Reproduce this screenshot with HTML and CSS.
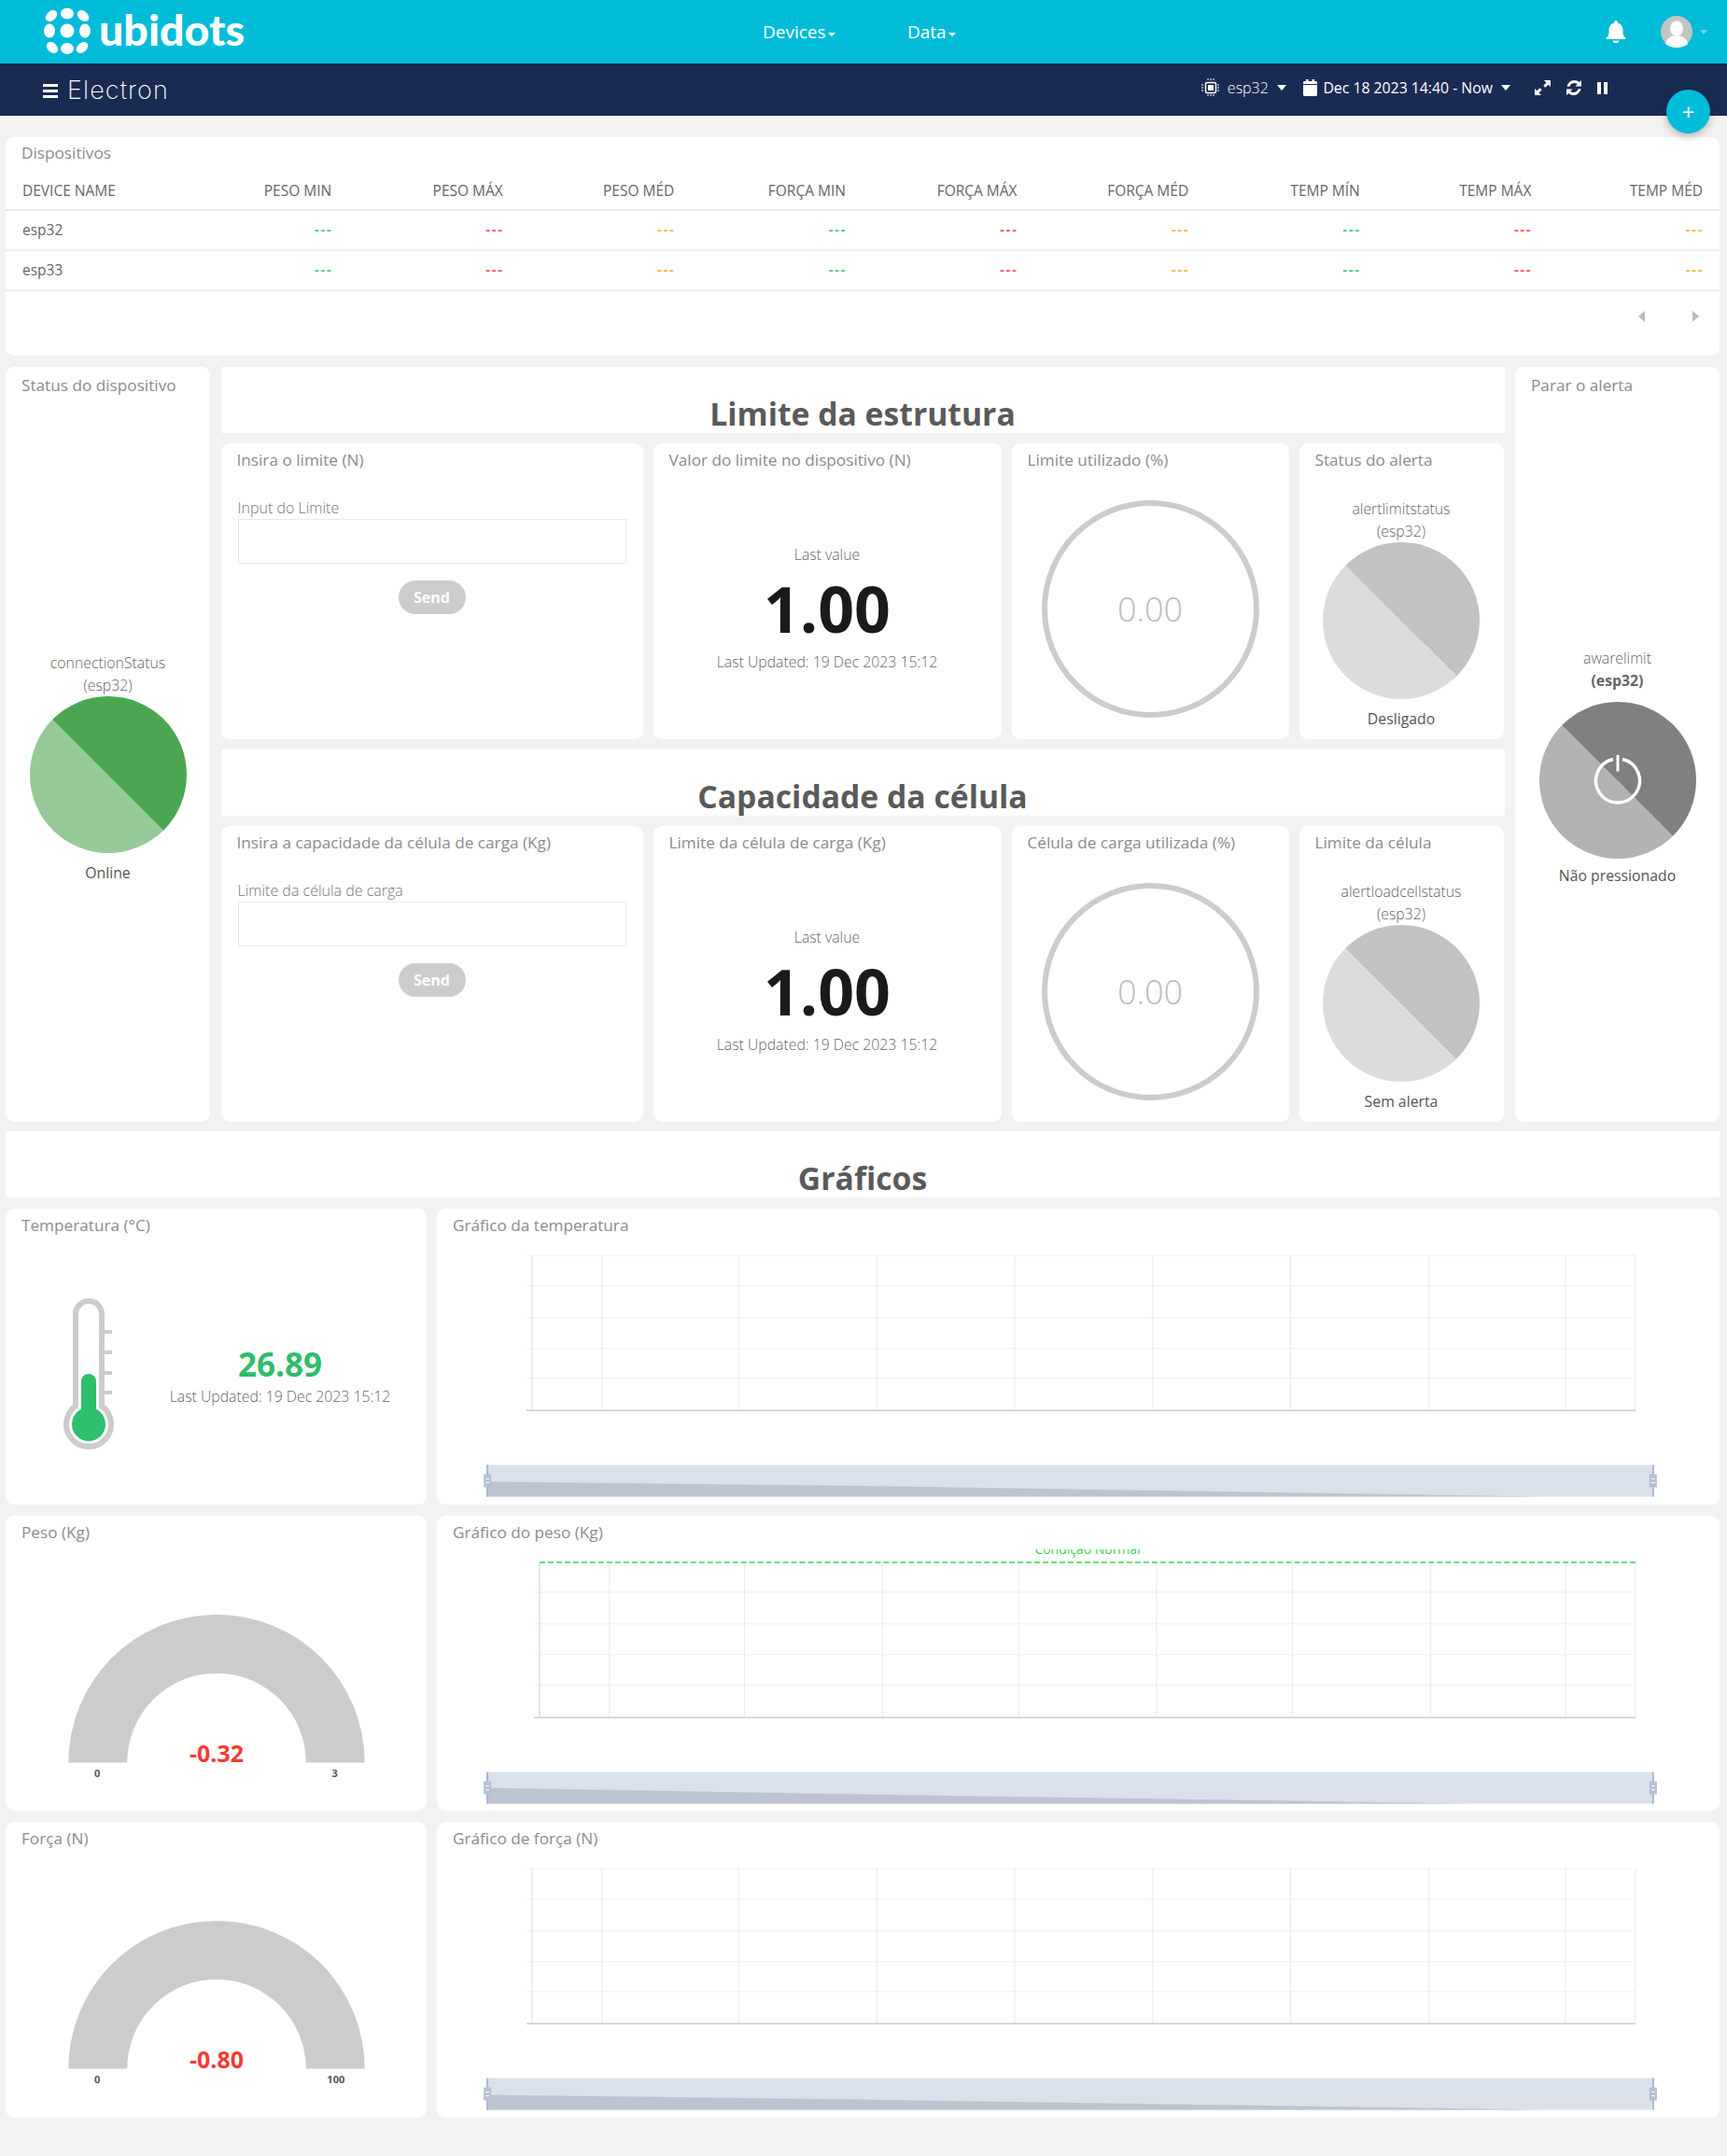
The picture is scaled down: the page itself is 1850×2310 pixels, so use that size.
FILE: index.html
```html
<!DOCTYPE html>
<html lang="en">
<head>
  <meta charset="UTF-8">
  <title>Electron - Ubidots</title>
  <link rel="stylesheet" href="styles.css">
</head>
<body>
  <header class="topbar">
    <div class="logo">
      <svg width="52" height="52" viewBox="-26 -26 52 52" fill="#fff">
        <circle r="7.5"/>
        <ellipse cy="-18.5" rx="7" ry="6"/>
        <ellipse cy="19" rx="7" ry="6"/>
        <ellipse cx="-19" rx="6" ry="7.5"/>
        <ellipse cx="19" rx="6" ry="7.5"/>
        <ellipse cx="-17" cy="-16" rx="7" ry="5" transform="rotate(-40 -17 -16)"/>
        <ellipse cx="17" cy="-16" rx="7" ry="5" transform="rotate(40 17 -16)"/>
        <ellipse cx="-16" cy="18" rx="7" ry="5" transform="rotate(40 -16 18)"/>
        <ellipse cx="16" cy="18" rx="7" ry="5" transform="rotate(-40 16 18)"/>
      </svg>
      <span class="logo-text">ubidots</span>
    </div>
    <nav class="nav-links">
      <a class="nav-link">Devices<i class="caret-small"></i></a>
      <a class="nav-link">Data<i class="caret-small"></i></a>
    </nav>
    <div class="user-menu">
      <svg class="bell" width="22" height="24" viewBox="0 0 22 24" fill="#fff">
        <path d="M11 0c1 0 1.700.7 1.700 1.700v.7c3.800.9 5.800 4 5.800 8v3.400c0 2 1.300 3.200 3 5v1.200H.5v-1.200c1.700-1.800 3-3 3-5v-3.400c0-4 2-7.100 5.800-8v-.7C9.300.7 10 0 11 0z"/>
        <path d="M7.500 21.500h7c0 1.500-1.500 2.500-3.500 2.500s-3.500-1-3.500-2.500z"/>
      </svg>
      <svg class="avatar" width="34" height="34" viewBox="0 0 34 34">
        <circle cx="17" cy="17" r="17" fill="#c4c4c4"/>
        <ellipse cx="17" cy="13.500" rx="7" ry="8" fill="#fff"/>
        <path d="M5 30c1-6 6-9 12-9s11 3 12 9c-3 2.600-7.500 4-12 4s-9-1.400-12-4z" fill="#fff"/>
      </svg>
      <i class="caret-pale"></i>
    </div>
  </header>

  <div class="subbar">
    <div class="burger"><i></i><i></i><i></i></div>
    <span class="dash-title">Electron</span>
    <div class="controls">
      <svg width="20" height="20" viewBox="0 0 20 20" fill="none" stroke="#fff">
        <rect x="4.500" y="4.500" width="11" height="11" rx="1.500" stroke-width="1.500"/>
        <rect x="7" y="7" width="6" height="6" fill="#fff" stroke="none"/>
        <path d="M7 0v3M10 0v3M13 0v3M7 17v3M10 17v3M13 17v3M0 7h3M0 10h3M0 13h3M17 7h3M17 10h3M17 13h3" stroke-width="1" stroke-dasharray="2 1"/>
      </svg>
      <span class="device-name">esp32</span>
      <i class="caret"></i>
      <svg class="calendar" width="15" height="18" viewBox="0 0 15 18" fill="#fff">
        <path d="M0 6h15v10.500c0 .8-.7 1.500-1.500 1.500h-12C.7 18 0 17.300 0 16.500z"/>
        <path d="M0 5V3.500C0 2.700.7 2 1.500 2H3V0h2.500v2h4V0H12v2h1.500c.8 0 1.500.7 1.500 1.500V5z"/>
      </svg>
      <span class="date-range">Dec 18 2023 14:40 - Now</span>
      <i class="caret"></i>
      <svg class="expand" width="17" height="16" viewBox="0 0 17 16" fill="#fff">
        <path d="M10 0h7v7l-2.400-2.300-3.300 3.100-2-2 3.200-3.200z"/>
        <path d="M0 16V9l2.400 2.300 3.300-3.100 2 2-3.200 3.200L7 16z"/>
      </svg>
      <svg class="refresh" width="16" height="16" viewBox="0 0 16 16" fill="#fff">
        <path d="M16 0v6.500H9.500l2.300-2.300C10.900 3.400 9.700 3 8.400 3 6 3 4 4.500 3.400 6.800H.6C1.300 2.900 4.500 0 8.400 0c2.200 0 4.200.8 5.500 2z"/>
        <path d="M0 16V9.500h6.500l-2.300 2.300c.9.800 2.100 1.200 3.400 1.200 2.400 0 4.400-1.500 5-3.800h2.800c-.7 3.900-3.900 6.800-7.800 6.800-2.200 0-4.200-.8-5.500-2z"/>
      </svg>
      <div class="pause"><i></i><i></i></div>
    </div>
  </div>
  <button class="fab">+</button>

  <main class="page">
    <section class="card devices">
      <h3 class="card-title title-top">Dispositivos</h3>
      <table class="device-table">
        <thead>
          <tr>
            <th>DEVICE NAME</th><th>PESO MIN</th><th>PESO MÁX</th><th>PESO MÉD</th><th>FORÇA MIN</th><th>FORÇA MÁX</th><th>FORÇA MÉD</th><th>TEMP MÍN</th><th>TEMP MÁX</th><th>TEMP MÉD</th>
          </tr>
        </thead>
        <tbody>
          <tr>
            <td>esp32</td><td class="ok">---</td><td class="bad">---</td><td class="warn">---</td><td class="ok">---</td><td class="bad">---</td><td class="warn">---</td><td class="ok">---</td><td class="bad">---</td><td class="warn">---</td>
          </tr>
          <tr>
            <td>esp33</td><td class="ok">---</td><td class="bad">---</td><td class="warn">---</td><td class="ok">---</td><td class="bad">---</td><td class="warn">---</td><td class="ok">---</td><td class="bad">---</td><td class="warn">---</td>
          </tr>
        </tbody>
      </table>
      <div class="pager"><i class="arrow-left"></i><i class="arrow-right"></i></div>
    </section>

    <section class="status-row">
      <div class="card side-card">
        <h3 class="card-title title-top2">Status do dispositivo</h3>
        <div class="indicator side-indicator">
          <p class="var-name">connectionStatus<br>(esp32)</p>
          <div class="pie pie-green"></div>
          <p class="pie-label">Online</p>
        </div>
      </div>

      <div class="middle">
        <h2 class="banner">Limite da estrutura</h2>
        <div class="middle-row">
          <div class="card">
            <h3 class="card-title">Insira o limite (N)</h3>
            <div class="input-form">
              <label class="input-label">Input do Limite</label>
              <div class="input-box"></div>
              <button class="send-btn">Send</button>
            </div>
          </div>
          <div class="card">
            <h3 class="card-title">Valor do limite no dispositivo (N)</h3>
            <div class="metric">
              <p class="metric-label">Last value</p>
              <p class="metric-value">1.00</p>
              <p class="metric-label">Last Updated: 19 Dec 2023 15:12</p>
            </div>
          </div>
          <div class="card">
            <h3 class="card-title">Limite utilizado (%)</h3>
            <div class="ring-wrap"><div class="ring">0.00</div></div>
          </div>
          <div class="card">
            <h3 class="card-title">Status do alerta</h3>
            <div class="indicator">
              <p class="var-name">alertlimitstatus<br>(esp32)</p>
              <div class="pie pie-grey"></div>
              <p class="pie-label">Desligado</p>
            </div>
          </div>
        </div>

        <h2 class="banner">Capacidade da célula</h2>
        <div class="middle-row">
          <div class="card">
            <h3 class="card-title">Insira a capacidade da célula de carga (Kg)</h3>
            <div class="input-form">
              <label class="input-label">Limite da célula de carga</label>
              <div class="input-box"></div>
              <button class="send-btn">Send</button>
            </div>
          </div>
          <div class="card">
            <h3 class="card-title">Limite da célula de carga (Kg)</h3>
            <div class="metric">
              <p class="metric-label">Last value</p>
              <p class="metric-value">1.00</p>
              <p class="metric-label">Last Updated: 19 Dec 2023 15:12</p>
            </div>
          </div>
          <div class="card">
            <h3 class="card-title">Célula de carga utilizada (%)</h3>
            <div class="ring-wrap"><div class="ring">0.00</div></div>
          </div>
          <div class="card">
            <h3 class="card-title">Limite da célula</h3>
            <div class="indicator">
              <p class="var-name">alertloadcellstatus<br>(esp32)</p>
              <div class="pie pie-grey"></div>
              <p class="pie-label">Sem alerta</p>
            </div>
          </div>
        </div>
      </div>

      <div class="card side-card">
        <h3 class="card-title title-top2">Parar o alerta</h3>
        <div class="indicator side-indicator alert-indicator">
          <p class="var-name">awarelimit<br><b>(esp32)</b></p>
          <div class="pie pie-dark">
            <svg width="60" height="60" viewBox="0 0 60 60" fill="none" stroke="#fff" stroke-width="3.500">
              <path d="M25 7.500a23.500 23.500 0 1 0 10 0"/>
              <path d="M30 3v17.500" stroke-width="3"/>
            </svg>
          </div>
          <p class="pie-label">Não pressionado</p>
        </div>
      </div>
    </section>

    <h2 class="banner banner-charts">Gráficos</h2>

    <section class="charts">
      <div class="card">
        <h3 class="card-title">Temperatura (°C)</h3>
        <div class="thermo-body">
          <svg class="thermo" width="62" height="170" viewBox="0 0 62 170">
            <path d="M17 119.500V21a14 14 0 0 1 28 0v98.500a24 24 0 1 1-28 0z" fill="none" stroke="#ccc" stroke-width="6"/>
            <path d="M48 40h8M48 62h8M48 84h8M48 105h8" stroke="#ccc" stroke-width="4"/>
            <rect x="23" y="85" width="16" height="50" rx="8" fill="#2ebf6c"/>
            <circle cx="31" cy="139" r="18" fill="#2ebf6c"/>
          </svg>
          <div class="thermo-info">
            <p class="thermo-value">26.89</p>
            <p class="metric-label">Last Updated: 19 Dec 2023 15:12</p>
          </div>
        </div>
      </div>
      <div class="card">
        <h3 class="card-title">Gráfico da temperatura</h3>
        <svg class="chart" width="1374" height="281" viewBox="0 0 1374 281" fill="none">
          <path d="M95 14h1190M95 47h1190M95 81h1190M95 114h1190M95 146h1190" stroke="#eee"/>
          <path d="M176 14v166M322.500 14v166M471 14v166M619 14v166M767 14v166M915 14v166M1063.500 14v166M1210 14v166M1285 14v166" stroke="#e9e9e9"/>
          <path d="M101 14v166" stroke="#ddd"/>
          <path d="M95 180.500h1190" stroke="#ccc" stroke-width="1.500"/>
          <rect x="52" y="239" width="1252" height="34" fill="#dbe1ea"/>
          <path d="M52 257l405 4.500 731 11.500H52z" fill="#bcc4cf"/>
          <path d="M53 239v34M1304 239v34" stroke="#a9b8cf" stroke-width="2"/>
          <rect x="49" y="249" width="8" height="14" fill="#b4c1d6"/>
          <rect x="1300" y="249" width="8" height="14" fill="#b4c1d6"/>
          <path d="M51 254h4M51 258h4M1302 254h4M1302 258h4" stroke="#fff"/>
        </svg>
      </div>

      <div class="card">
        <h3 class="card-title">Peso (Kg)</h3>
        <svg class="gauge" width="451" height="281" viewBox="0 0 451 281">
          <path d="M67 229a159 159 0 0 1 318 0h-63a96 96 0 0 0-192 0z" fill="#ccc"/>
          <text class="gauge-value" x="226" y="228.500">-0.32</text>
          <text class="gauge-limit" x="98" y="244">0</text>
          <text class="gauge-limit" x="353" y="244">3</text>
        </svg>
      </div>
      <div class="card">
        <h3 class="card-title">Gráfico do peso (Kg)</h3>
        <svg class="chart" width="1374" height="281" viewBox="0 0 1374 281" fill="none">
          <text class="limit-label" x="697" y="5">Condição Normal</text>
          <path d="M103 46h1182M103 80h1182M103 113h1182M103 146h1182" stroke="#eee"/>
          <path d="M184 14v166M329 14v166M477 14v166M623 14v166M771 14v166M917 14v166M1065 14v166M1210 14v166M1285 14v166" stroke="#e9e9e9"/>
          <path d="M109 14v166" stroke="#ccc"/>
          <path d="M103 180.500h1182" stroke="#ccc" stroke-width="1.500"/>
          <path d="M109 14h1176" stroke="#33d653" stroke-width="1.500" stroke-dasharray="6 3"/>
          <rect x="52" y="239" width="1252" height="34" fill="#dbe1ea"/>
          <path d="M52 256l405 7 649 10H52z" fill="#bcc4cf"/>
          <path d="M53 239v34M1304 239v34" stroke="#a9b8cf" stroke-width="2"/>
          <rect x="49" y="249" width="8" height="14" fill="#b4c1d6"/>
          <rect x="1300" y="249" width="8" height="14" fill="#b4c1d6"/>
          <path d="M51 254h4M51 258h4M1302 254h4M1302 258h4" stroke="#fff"/>
        </svg>
      </div>

      <div class="card">
        <h3 class="card-title">Força (N)</h3>
        <svg class="gauge" width="451" height="281" viewBox="0 0 451 281">
          <path d="M67 229a159 159 0 0 1 318 0h-63a96 96 0 0 0-192 0z" fill="#ccc"/>
          <text class="gauge-value" x="226" y="228.500">-0.80</text>
          <text class="gauge-limit" x="98" y="244">0</text>
          <text class="gauge-limit" x="354" y="244">100</text>
        </svg>
      </div>
      <div class="card">
        <h3 class="card-title">Gráfico de força (N)</h3>
        <svg class="chart" width="1374" height="281" viewBox="0 0 1374 281" fill="none">
          <path d="M95 14h1190M95 47h1190M95 81h1190M95 114h1190M95 146h1190" stroke="#eee"/>
          <path d="M176 14v166M322.500 14v166M471 14v166M619 14v166M767 14v166M915 14v166M1063.500 14v166M1210 14v166M1285 14v166" stroke="#e9e9e9"/>
          <path d="M101 14v166" stroke="#ddd"/>
          <path d="M95 180.500h1190" stroke="#ccc" stroke-width="1.500"/>
          <rect x="52" y="239" width="1252" height="34" fill="#dbe1ea"/>
          <path d="M52 257l405 5 739 11H52z" fill="#bcc4cf"/>
          <path d="M53 239v34M1304 239v34" stroke="#a9b8cf" stroke-width="2"/>
          <rect x="49" y="249" width="8" height="14" fill="#b4c1d6"/>
          <rect x="1300" y="249" width="8" height="14" fill="#b4c1d6"/>
          <path d="M51 254h4M51 258h4M1302 254h4M1302 258h4" stroke="#fff"/>
        </svg>
      </div>
    </section>
  </main>
</body>
</html>
```

FILE: styles.css
```css
/* Page */
* {
  box-sizing: border-box;
}

body {
  margin: 0;
  min-height: 2310px;
  position: relative;
  background-color: #f2f2f2;
  font-family: "Open Sans", sans-serif;
  color: #555;
}

p, h2, h3 {
  margin: 0;
}

/* Top bars */
.topbar {
  display: flex;
  align-items: center;
  height: 68px;
  padding-left: 46px;
  background-color: #00bcd8;
  color: #fff;
}

.logo {
  display: flex;
  align-items: center;
  gap: 8px;
  width: 771px;
  margin-top: -2px;
}

.logo-text {
  margin-top: -5px;
  font-family: Lato, sans-serif;
  font-weight: 900;
  font-size: 46.500px;
  line-height: 52px;
}

.nav-links {
  display: flex;
}

.nav-link {
  width: 155px;
  font-size: 19px;
}

.caret-small {
  display: inline-block;
  margin-left: 2px;
  vertical-align: 2px;
  border-top: 4px solid #fff;
  border-left: 4px solid transparent;
  border-right: 4px solid transparent;
}

.user-menu {
  display: flex;
  align-items: center;
  margin-left: auto;
  padding-right: 21px;
}

.bell {
  margin-right: 37px;
}

.caret-pale {
  margin-left: 8px;
  border-top: 5px solid #6fd4e4;
  border-left: 4px solid transparent;
  border-right: 4px solid transparent;
}

.subbar {
  display: flex;
  align-items: center;
  height: 56px;
  padding-left: 46px;
  background-color: #1a2b53;
  color: #fff;
}

.burger {
  display: flex;
  flex-direction: column;
  gap: 3px;
  width: 16px;
  margin-top: 2px;
}

.burger i {
  height: 3px;
  background-color: #fff;
}

.dash-title {
  margin-left: 10px;
  font-family: Inter, sans-serif;
  font-weight: 200;
  font-size: 27px;
  letter-spacing: 1.100px;
}

.controls {
  display: flex;
  align-items: center;
  margin-left: auto;
  padding-right: 128px;
  margin-top: -4px;
  font-size: 16px;
}

.device-name {
  margin-left: 7.500px;
  font-weight: 300;
}

.date-range {
  margin-left: 6px;
  font-size: 15.800px;
}

.caret {
  margin-left: 9px;
  border-top: 6px solid #fff;
  border-left: 5.500px solid transparent;
  border-right: 5.500px solid transparent;
}

.calendar {
  margin-left: 18.500px;
}

.expand {
  margin-left: 26px;
}

.refresh {
  margin-left: 17px;
}

.pause {
  display: flex;
  gap: 3px;
  margin-left: 17px;
}

.pause i {
  width: 4px;
  height: 13px;
  background-color: #fff;
}

.fab {
  position: absolute;
  top: 96px;
  right: 18px;
  width: 47px;
  height: 47px;
  border: none;
  border-radius: 50%;
  background-color: #00bcd8;
  color: #fff;
  font-family: "Open Sans", sans-serif;
  font-size: 24px;
  line-height: 47px;
  padding: 0;
  box-shadow: 0 3px 8px rgba(0, 0, 0, 0.25);
}

/* Cards */
.page {
  padding: 23px 8px 0 6px;
}

.card {
  display: flex;
  flex-direction: column;
  min-width: 0;
  background-color: #fff;
  border-radius: 9px;
}

.card-title {
  height: 36px;
  padding: 8px 17px 8px;
  font-weight: 400;
  font-size: 17.200px;
  line-height: 20px;
  color: #8c8c8c;
}

.title-top {
  padding-top: 7px;
}

.title-top2 {
  padding-top: 10px;
}

/* Device table */
.devices {
  height: 234px;
}

.device-table {
  width: 100%;
  table-layout: fixed;
  border-collapse: collapse;
  font-size: 15.500px;
}

.device-table th,
.device-table td {
  padding: 0 18px;
  text-align: right;
  white-space: nowrap;
}

.device-table th:first-child,
.device-table td:first-child {
  text-align: left;
}

.device-table th {
  height: 42px;
  font-weight: 400;
  color: #666;
  border-bottom: 2px solid #e8e8e8;
}

.device-table td {
  height: 43px;
  padding-bottom: 2px;
  border-bottom: 2px solid #eee;
  color: #666;
  font-weight: 400;
}

.device-table .ok,
.device-table .bad,
.device-table .warn {
  padding-right: 17px;
  font-weight: 600;
  letter-spacing: 1.500px;
}

.device-table .ok {
  color: #3ec46d;
}

.device-table .bad {
  color: #f44;
}

.device-table .warn {
  color: #fa3;
}

.pager {
  display: flex;
  justify-content: flex-end;
  gap: 51px;
  padding: 21px 22px 0 0;
}

.arrow-left {
  border-right: 7px solid #bbb;
  border-top: 6px solid transparent;
  border-bottom: 6px solid transparent;
}

.arrow-right {
  border-left: 7px solid #bbb;
  border-top: 6px solid transparent;
  border-bottom: 6px solid transparent;
}

/* Status row */
.status-row {
  display: grid;
  grid-template-columns: 219px 1375px 219px;
  justify-content: space-between;
  margin-top: 12px;
  height: 809px;
}

.middle {
  display: grid;
  grid-template-rows: 71px 317px 71px 317px;
  row-gap: 11px;
}

.middle-row {
  display: grid;
  grid-template-columns: 452px 373px 297px 219px;
  column-gap: 11px;
}

.banner {
  height: 71px;
  padding-top: 32px;
  background-color: #fff;
  text-align: center;
  font-weight: 700;
  font-size: 33.700px;
  line-height: 36px;
  color: #5a5a5a;
}

.banner-charts {
  margin-top: 10px;
}

/* Indicators */
.indicator {
  display: flex;
  flex: 1;
  flex-direction: column;
  align-items: center;
  justify-content: center;
  padding-top: 12px;
  text-align: center;
}

.side-indicator {
  padding-top: 14px;
}

.alert-indicator {
  padding-top: 11.500px;
}

.var-name {
  font-weight: 300;
  font-size: 15.800px;
  line-height: 24px;
  color: #666;
}

.alert-indicator .var-name b {
  font-weight: 700;
}

.pie {
  display: flex;
  align-items: center;
  justify-content: center;
  width: 168px;
  height: 168px;
  border-radius: 50%;
}

.pie-green {
  background: linear-gradient(to top right, #96c998 50%, #4ca651 50%);
}

.pie-grey {
  background: linear-gradient(to top right, #dcdcdc 50%, #c2c2c2 50%);
}

.pie-dark {
  margin-top: 11.500px;
  background: linear-gradient(to top right, #b2b2b2 50%, #808080 50%);
}

.pie-label {
  margin-top: 9px;
  font-size: 15.800px;
  line-height: 24px;
  color: #555;
}

.alert-indicator .pie-label {
  margin-top: 6px;
}

/* Input widget */
.input-form {
  display: flex;
  flex-direction: column;
  padding: 21px 18px 0;
}

.input-label {
  font-weight: 300;
  font-size: 16px;
  line-height: 24px;
  color: #777;
}

.input-box {
  height: 48px;
  border: 1px solid #e8e8e8;
}

.send-btn {
  align-self: center;
  width: 72px;
  height: 36px;
  margin-top: 18px;
  border: none;
  border-radius: 18px;
  background-color: #ccc;
  color: #fff;
  font-family: "Open Sans", sans-serif;
  font-weight: 700;
  font-size: 16px;
}

/* Last value widget */
.metric {
  display: flex;
  flex: 1;
  flex-direction: column;
  align-items: center;
  justify-content: center;
  text-align: center;
}

.metric-label {
  font-weight: 300;
  font-size: 15.800px;
  line-height: 24px;
  color: #666;
}

.metric-value {
  margin-top: 1px;
  font-weight: 700;
  font-size: 68px;
  line-height: 90px;
  color: #1a1a1a;
}

/* Ring widget */
.ring-wrap {
  display: flex;
  flex: 1;
  align-items: center;
  justify-content: center;
  padding-top: 2px;
}

.ring {
  display: flex;
  align-items: center;
  justify-content: center;
  width: 233px;
  height: 233px;
  border: 6px solid #ccc;
  border-radius: 50%;
  font-weight: 300;
  font-size: 36px;
  color: #bbb;
}

/* Charts */
.charts {
  display: grid;
  grid-template-columns: 451px 1374px;
  grid-auto-rows: 316.500px;
  justify-content: space-between;
  row-gap: 12px;
  margin-top: 12px;
}

.chart,
.gauge {
  display: block;
}

.limit-label {
  fill: #33d653;
  font-size: 14px;
  text-anchor: middle;
}

.gauge-value {
  fill: #f53a33;
  font-weight: 700;
  font-size: 25px;
  text-anchor: middle;
}

.gauge-limit {
  fill: #555;
  font-weight: 700;
  font-size: 11px;
  text-anchor: middle;
}

.thermo-body {
  display: flex;
  align-items: flex-start;
  padding: 56px 0 0 58px;
}

.thermo-info {
  width: 240px;
  margin: 53px 0 0 54px;
  text-align: center;
}

.thermo-value {
  font-weight: 700;
  font-size: 35px;
  line-height: 44px;
  color: #2ebd6b;
}
```
